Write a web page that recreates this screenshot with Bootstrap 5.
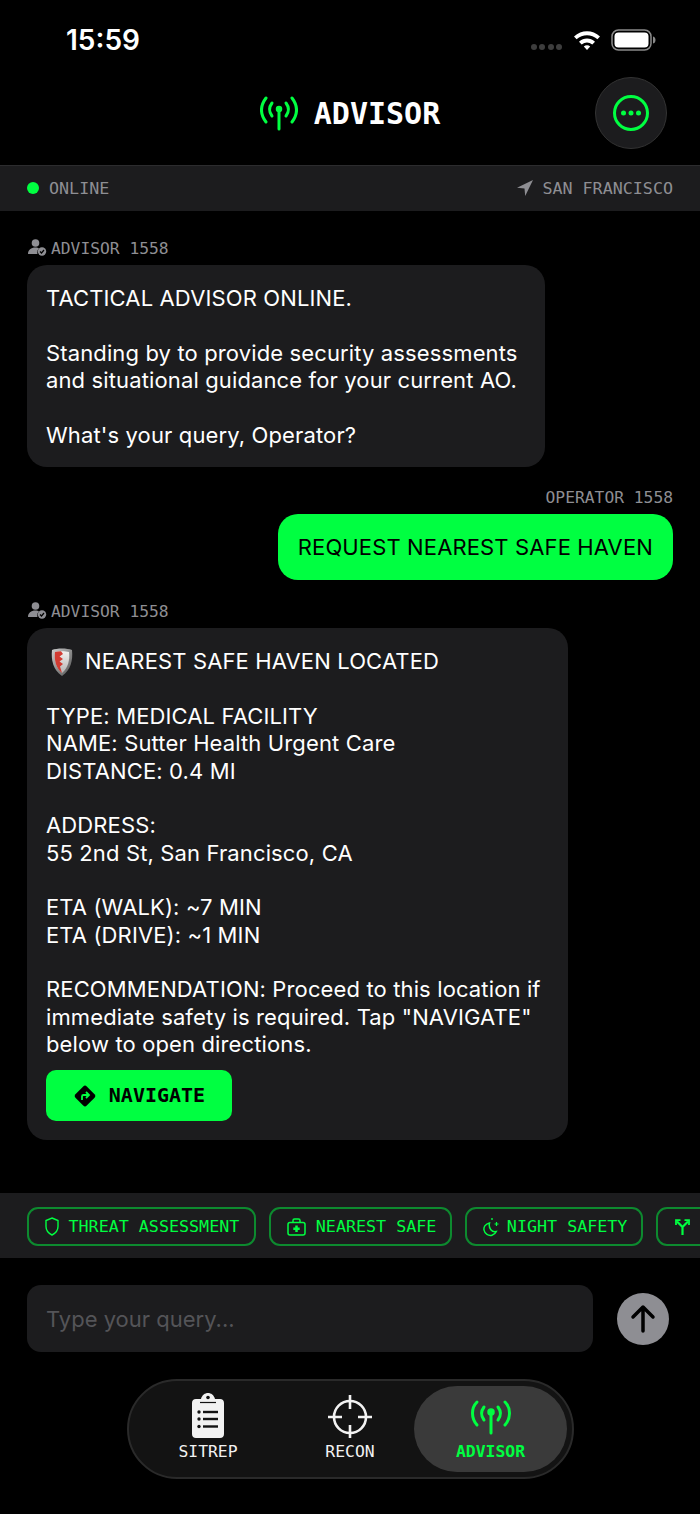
<!DOCTYPE html>
<html lang="en">
<head>
  <meta charset="UTF-8">
  <title>Advisor</title>
  <link href="https://cdn.jsdelivr.net/npm/bootstrap@5.3.0/dist/css/bootstrap.min.css" rel="stylesheet">
  <style>
    html, body { height: 100%; }
    body { background: #000; color: #fff; font-family: "Inter", "Liberation Sans", sans-serif; overflow: hidden; }
    .screen { width: 700px; height: 1514px; padding-bottom: 35px; }
    .mono { font-family: "DejaVu Sans Mono", "Liberation Mono", monospace; }

    .status-row { height: 70px; padding: 10px 44px 0 66px; }
    .clock { font-size: 28px; font-weight: 600; line-height: 1; }
    .signal-dots { gap: 2.5px; margin-top: 14px; margin-right: 11px; }
    .signal-dots span { width: 6px; height: 6px; border-radius: 50%; background: #3d3d3d; }
    .wifi-icon { margin-right: 10px; }

    .app-head { height: 95px; padding: 0 33px 10px; display: grid; grid-template-columns: 1fr auto 1fr; align-items: center; }
    .app-title { font-size: 30px; font-weight: 700; line-height: 1; padding-top: 2px; }
    .menu-btn { width: 72px; height: 72px; border-radius: 50%; background: #1c1c1e; border: 1px solid #333; padding: 0; }

    .strip { height: 46px; background: #1c1c1e; border-top: 1px solid #2c2c2e; padding: 0 27px; font-size: 16.7px; color: #8e8e93; }
    .strip-left { gap: 10px; }
    .strip-right { gap: 9px; }
    .online-dot { width: 12px; height: 12px; border-radius: 50%; background: #00ff41; }

    .feed { padding: 28px 27px 0; }
    .who { height: 18px; font-size: 16.3px; line-height: 20px; color: #8e8e93; margin-bottom: 8px; }
    .who-icon { margin-left: 1px; margin-right: 4px; }
    .bubble { font-size: 22px; letter-spacing: .13px; line-height: 27.33px; padding: 20px 27px 18px 19px; border-radius: 20px; background: #1c1c1e; color: #fff; width: fit-content; }
    .bubble-me { background: #00ff41; color: #000; padding: 20.500px 20px 18.500px; }
    .msg-gap { margin-bottom: 21px; }
    .msg-gap-lg { margin-bottom: 22px; }
    .shield-mark { margin: -2px 7px -2px 0; }
    .nav-action { background: #00ff41; color: #000; font-size: 20px; font-weight: 700; height: 51px; width: 186px; margin: 12px 0 1px; border-radius: 10px; border: 0; padding: 0; gap: 12px; }

    .chip-bar { height: 65px; background: #1c1c1e; padding: 1px 0 0 27px; gap: 13.500px; }
    .chip-item { height: 39px; border: 2px solid #0d8a2f; border-radius: 11px; color: #00ff41; font-size: 16.7px; white-space: nowrap; flex-shrink: 0; background: transparent; padding: 1px 13.500px 0 15.500px; gap: 9px; }
    .chip-threat { padding-right: 14.500px; }
    .chip-threat svg { margin-right: 1px; }
    .chip-safe svg { margin-right: 1px; }
    .chip-stub { width: 80px; padding-left: 16.500px; }
    .moon-icon { margin-right: -2px; }

    .input-row { padding: 27px 31px 0 27px; }
    .query-box.form-control { height: 67px; width: 566px; background: #1c1c1e; border: 0; border-radius: 14px; color: #fff; font-size: 22px; padding: 0 19px; box-shadow: none; }
    .query-box::placeholder { color: #545458; opacity: 1; }
    .send-btn { width: 52px; height: 52px; border-radius: 50%; background: #8e8e93; border: 0; padding: 0; }

    .dock { width: 447px; height: 100px; margin: 27px 0 0 127px; background: #131313; border: 2px solid #2a2a2a; border-radius: 50px; padding: 5px; }
    .dock-item { height: 86px; padding-top: 7px; color: #f2f2f2; font-size: 16.4px; line-height: 16px; gap: 6px; }
    .dock-a { width: 148px; }
    .dock-b { width: 132px; padding-left: 4px; }
    .dock-on { width: 153px; background: #3a3a3a; border-radius: 43px; color: #00ff41; font-weight: 700; }
  </style>
</head>
<body>
  <div class="screen d-flex flex-column">

    <div class="status-row d-flex align-items-center justify-content-between flex-shrink-0">
      <div class="clock">15:59</div>
      <div class="d-flex align-items-center">
        <div class="signal-dots d-flex"><span></span><span></span><span></span><span></span></div>
        <svg class="wifi-icon" width="28" height="22" viewBox="0 0 28 22"><path d="M1 7.500C8.500 .5 19.500 .5 27 7.500L24.400 10.300C18.400 4.800 9.600 4.800 3.600 10.300Z" fill="#fff"/><path d="M6 12.800C10.800 8.500 17.200 8.500 22 12.800L19.300 15.600C15.800 12.700 12.200 12.700 8.700 15.600Z" fill="#fff"/><path d="M10.800 17.500C12.700 15.900 15.300 15.900 17.200 17.500L14 21Z" fill="#fff"/></svg>
        <svg width="45" height="22" viewBox="0 0 45 22"><rect x="1" y="1" width="39" height="20" rx="6.500" fill="none" stroke="#8a8a8a" stroke-width="1.500"/><rect x="3.500" y="3.500" width="34" height="15" rx="4" fill="#fff"/><path d="M42 7.500c2 .5 2.500 2 2.500 3.500s-.5 3-2.500 3.500Z" fill="#8a8a8a"/></svg>
      </div>
    </div>

    <div class="app-head flex-shrink-0">
      <div></div>
      <div class="d-flex align-items-center gap-3">
        <svg width="38" height="36" viewBox="0 0 38 36" fill="none" stroke="#00ff41" stroke-width="3" stroke-linecap="round"><path d="M6 3C0 11 0 19 6 27"/><path d="M12 8C9 12 9 17 12 21"/><path d="M32 3C38 11 38 19 32 27"/><path d="M26 8C29 12 29 17 26 21"/><path d="M19 14V34"/><circle cx="19" cy="14" r="2.500" fill="#00ff41" stroke-width="1.500"/></svg>
        <div class="app-title mono">ADVISOR</div>
      </div>
      <div class="d-flex justify-content-end">
        <button class="menu-btn d-flex align-items-center justify-content-center" type="button" aria-label="Menu">
          <svg width="38" height="38" viewBox="0 0 38 38"><circle cx="19" cy="19" r="16.500" fill="none" stroke="#00ff41" stroke-width="3"/><circle cx="11.500" cy="19" r="2.500" fill="#00ff41"/><circle cx="19" cy="19" r="2.500" fill="#00ff41"/><circle cx="26.500" cy="19" r="2.500" fill="#00ff41"/></svg>
        </button>
      </div>
    </div>

    <div class="strip mono d-flex align-items-center justify-content-between flex-shrink-0">
      <div class="strip-left d-flex align-items-center"><span class="online-dot"></span>ONLINE</div>
      <div class="strip-right d-flex align-items-center">
        <svg width="16" height="16" viewBox="0 0 16 16"><path d="M16 0L0 7.800L7.500 8.500L8.200 16Z" fill="#8e8e93"/></svg>SAN FRANCISCO
      </div>
    </div>

    <div class="feed flex-grow-1 overflow-hidden">
      <div class="who mono d-flex align-items-start">
        <svg class="who-icon flex-shrink-0" width="19" height="17" viewBox="0 0 19 17"><circle cx="7.500" cy="4" r="3.800" fill="#8e8e93"/><path d="M0 15c0-4 3-6.500 7.500-6.500 1.500 0 2.500.2 3.500.7-1.300 1-2 2.800-1.600 5.800Z" fill="#8e8e93"/><circle cx="14" cy="12.500" r="4.200" fill="#8e8e93"/><path d="M12 12.500l1.500 1.500 2.500-3" fill="none" stroke="#000" stroke-width="1.200"/></svg>ADVISOR 1558
      </div>
      <div class="bubble msg-gap">
        TACTICAL ADVISOR ONLINE.<br><br>
        Standing by to provide security assessments<br>
        and situational guidance for your current AO.<br><br>
        What's your query, Operator?
      </div>

      <div class="who mono text-end">OPERATOR 1558</div>
      <div class="bubble bubble-me msg-gap-lg ms-auto">REQUEST NEAREST SAFE HAVEN</div>

      <div class="who mono d-flex align-items-start">
        <svg class="who-icon flex-shrink-0" width="19" height="17" viewBox="0 0 19 17"><circle cx="7.500" cy="4" r="3.800" fill="#8e8e93"/><path d="M0 15c0-4 3-6.500 7.500-6.500 1.500 0 2.500.2 3.500.7-1.300 1-2 2.800-1.600 5.800Z" fill="#8e8e93"/><circle cx="14" cy="12.500" r="4.200" fill="#8e8e93"/><path d="M12 12.500l1.500 1.500 2.500-3" fill="none" stroke="#000" stroke-width="1.200"/></svg>ADVISOR 1558
      </div>
      <div class="bubble">
        <div class="d-flex align-items-center">
          <svg class="shield-mark flex-shrink-0" width="32" height="30" viewBox="0 0 32 30"><defs><linearGradient id="steel" x1="0" y1="0" x2="1" y2="1"><stop offset="0" stop-color="#cfcfcf"/><stop offset="1" stop-color="#4f4f4f"/></linearGradient><linearGradient id="plate" x1="0" y1="0" x2="0" y2="1"><stop offset="0" stop-color="#f3f1ee"/><stop offset="1" stop-color="#b5b5b5"/></linearGradient></defs><path d="M6 3C11 1 21 1 26 3C27 13 25 23 16 29C7 23 5 13 6 3Z" fill="url(#steel)"/><path d="M9 5C13 4 19 4 23 5C24 13 22 21 16 26C10 21 8 13 9 5Z" fill="url(#plate)"/><path d="M9 5C11 4.500 13 4.300 15 4.300L17 7L13.500 9.500L17 12L13.500 14.500L17 17L14 19.500L16 26C10 21 8 13 9 5Z" fill="#d23b32"/></svg>
          <span>NEAREST SAFE HAVEN LOCATED</span>
        </div>
        <br>
        TYPE: MEDICAL FACILITY<br>
        NAME: Sutter Health Urgent Care<br>
        DISTANCE: 0.4 MI<br><br>
        ADDRESS:<br>
        55 2nd St, San Francisco, CA<br><br>
        ETA (WALK): ~7 MIN<br>
        ETA (DRIVE): ~1 MIN<br><br>
        RECOMMENDATION: Proceed to this location if<br>
        immediate safety is required. Tap "NAVIGATE"<br>
        below to open directions.
        <button class="nav-action mono d-flex align-items-center justify-content-center" type="button">
          <svg width="24" height="24" viewBox="0 0 24 24"><rect x="4" y="4" width="16" height="16" rx="2.500" transform="rotate(45 12 12)" fill="#000"/><path d="M9 16V12.500C9 11.500 9.700 11 10.500 11H15.500M13 8L16 11L13 14" fill="none" stroke="#00ff41" stroke-width="1.800"/></svg>
          NAVIGATE
        </button>
      </div>
    </div>

    <div class="chip-bar d-flex align-items-center overflow-hidden flex-shrink-0">
      <div class="chip-item chip-threat mono d-flex align-items-center">
        <svg width="14" height="19" viewBox="0 0 14 19" fill="none" stroke="#00ff41" stroke-width="1.400"><path d="M7 1L13 3.500V9.500C13 13.500 10.500 16.300 7 18C3.500 16.300 1 13.500 1 9.500V3.500Z"/></svg>THREAT ASSESSMENT
      </div>
      <div class="chip-item chip-safe mono d-flex align-items-center">
        <svg width="19" height="18" viewBox="0 0 19 18" fill="none" stroke="#00ff41" stroke-width="1.500"><rect x="1" y="4.500" width="17" height="12.500" rx="2"/><path d="M6 4.500V2.500C6 1.500 6.500 1 7.500 1H11.500C12.500 1 13 1.500 13 2.500V4.500"/><path d="M9.500 7.500V14M6.300 10.700H12.700" stroke-width="2.500"/></svg>NEAREST SAFE
      </div>
      <div class="chip-item mono d-flex align-items-center">
        <svg class="moon-icon" width="17" height="20" viewBox="0 0 17 20" fill="none" stroke="#00ff41" stroke-width="1.500"><path d="M6.500 6C2.500 7 .5 10 1 13C1.700 17 5.500 19 9 18.200C11 17.700 12.500 16.300 13.300 14.500C9 15.500 5.300 11.500 6.500 6Z"/><path d="M13.500 5V9M11.500 7H15.500" stroke-width="1.200"/><circle cx="9" cy="2" r=".9" fill="#00ff41" stroke="none"/></svg>NIGHT SAFETY
      </div>
      <div class="chip-item chip-stub d-flex align-items-center">
        <svg width="15" height="16" viewBox="0 0 15 16" fill="none" stroke="#00ff41" stroke-width="2.200"><path d="M7.500 16V8L2 2.500M7.500 8L13 2.500"/><path d="M1 6V1.200H5.500M9.500 1.200H14V6" stroke-width="1.800"/></svg>
      </div>
    </div>

    <div class="input-row d-flex align-items-center justify-content-between flex-shrink-0">
      <input class="query-box form-control" type="text" placeholder="Type your query...">
      <button class="send-btn d-flex align-items-center justify-content-center" type="button" aria-label="Send">
        <svg width="26" height="30" viewBox="0 0 26 30" fill="none" stroke="#000" stroke-width="3.500" stroke-linecap="round" stroke-linejoin="round"><path d="M13 27V3M3 13L13 3L23 13"/></svg>
      </button>
    </div>

    <div class="dock d-flex flex-shrink-0">
      <div class="dock-item dock-a mono d-flex flex-column align-items-center">
        <svg width="32" height="45" viewBox="0 0 32 45"><path d="M4 6H9C10 2 13 0 16 0S22 2 23 6H28C30.500 6 32 7.500 32 10V41C32 43.500 30.500 45 28 45H4C1.500 45 0 43.500 0 41V10C0 7.500 1.500 6 4 6Z" fill="#f2f2f2"/><circle cx="16" cy="4.500" r="1.800" fill="#131313"/><path d="M8 9.500H24" stroke="#131313" stroke-width="1.200"/><g fill="#131313"><circle cx="7" cy="19" r="1.700"/><circle cx="7" cy="26" r="1.700"/><circle cx="7" cy="33.500" r="1.700"/><rect x="11" y="17.800" width="15" height="2.400"/><rect x="11" y="24.800" width="15" height="2.400"/><rect x="11" y="32.300" width="15" height="2.400"/></g></svg>
        <span>SITREP</span>
      </div>
      <div class="dock-item dock-b mono d-flex flex-column align-items-center">
        <svg width="46" height="45" viewBox="0 0 46 45" fill="none" stroke="#f2f2f2" stroke-width="2.600"><circle cx="23" cy="24" r="16"/><path d="M23 2V16M23 32V46M1 24H15M31 24H45"/></svg>
        <span>RECON</span>
      </div>
      <div class="dock-item dock-on mono d-flex flex-column align-items-center">
        <svg width="42" height="45" viewBox="0 0 42 45" fill="none" stroke="#00ff41" stroke-width="3" stroke-linecap="round"><path d="M7 9C1 15 1 25 7 32"/><path d="M14 14C11 18 11 23 14 27"/><path d="M35 9C41 15 41 25 35 32"/><path d="M28 14C31 18 31 23 28 27"/><path d="M21 20V40"/><circle cx="21" cy="19" r="3" fill="#00ff41" stroke-width="1.500"/></svg>
        <span>ADVISOR</span>
      </div>
    </div>
  </div>

  <script src="https://cdn.jsdelivr.net/npm/bootstrap@5.3.0/dist/js/bootstrap.bundle.min.js"></script>
</body>
</html>
